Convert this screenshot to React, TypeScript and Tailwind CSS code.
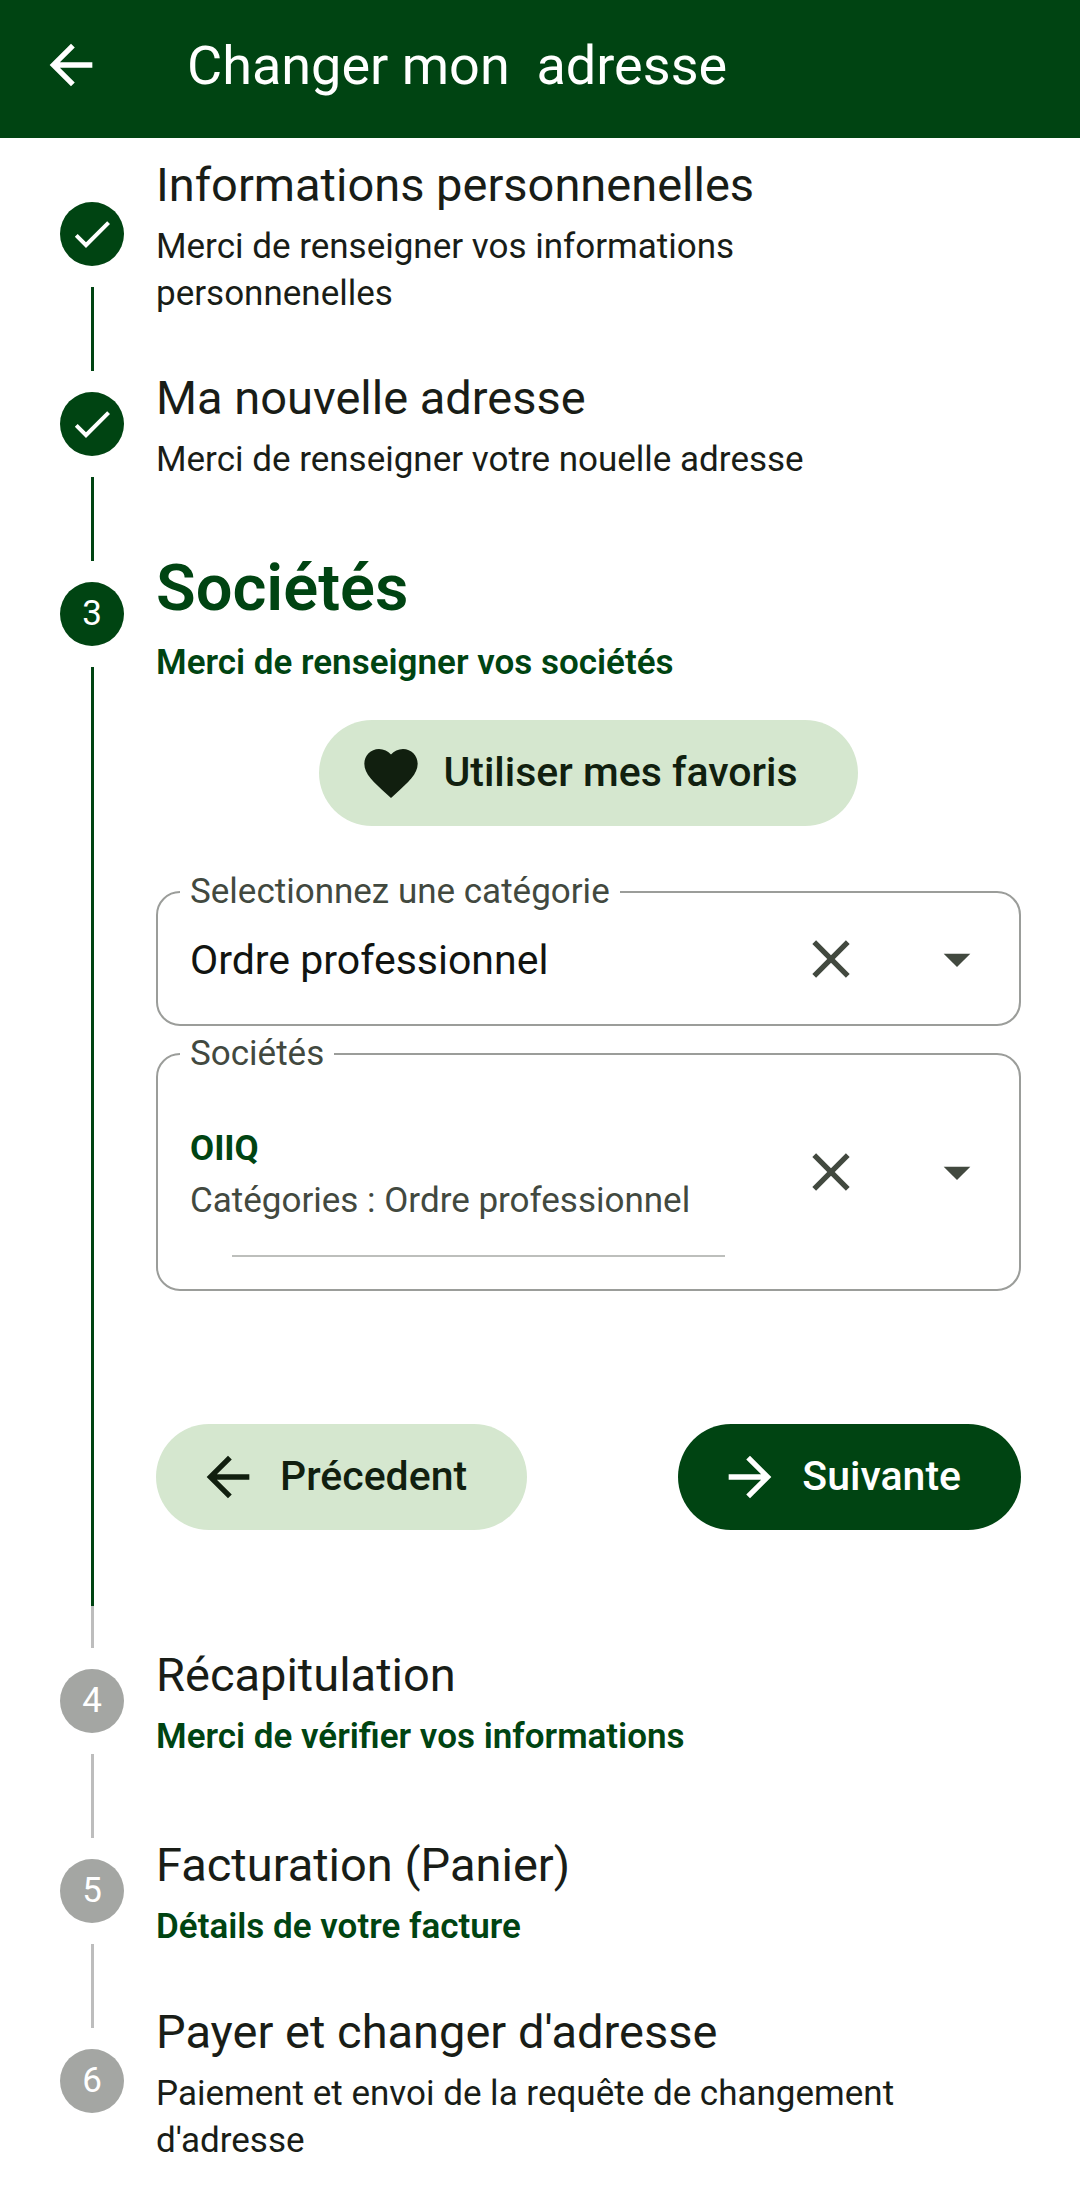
import React, { useState } from 'react';
import { MdArrowBack, MdArrowDropDown, MdArrowForward, MdCheck, MdClose, MdFavorite } from 'react-icons/md';

type StepState = 'done' | 'active' | 'todo';

interface StepDef {
  number: number;
  title: string;
  subtitle: string;
  state: StepState;
  highlight: boolean; // subtitle in bold green
}

const STEPS: StepDef[] = [
  {
    number: 1,
    title: 'Informations personnenelles',
    subtitle: 'Merci de renseigner vos informations personnenelles',
    state: 'done',
    highlight: false,
  },
  {
    number: 2,
    title: 'Ma nouvelle adresse',
    subtitle: 'Merci de renseigner votre nouelle adresse',
    state: 'done',
    highlight: false,
  },
  {
    number: 3,
    title: 'Sociétés',
    subtitle: 'Merci de renseigner vos sociétés',
    state: 'active',
    highlight: true,
  },
  {
    number: 4,
    title: 'Récapitulation',
    subtitle: 'Merci de vérifier vos informations',
    state: 'todo',
    highlight: true,
  },
  {
    number: 5,
    title: 'Facturation (Panier)',
    subtitle: 'Détails de votre facture',
    state: 'todo',
    highlight: true,
  },
  {
    number: 6,
    title: "Payer et changer d'adresse",
    subtitle: "Paiement et envoi de la requête de changement d'adresse",
    state: 'todo',
    highlight: false,
  },
];

interface StepProps {
  step: StepDef;
  first: boolean;
  last: boolean;
  children?: React.ReactNode;
}

const Step: React.FC<StepProps> = ({ step, first, last, children }) => {
  const todo = step.state === 'todo';
  const lineColor = todo ? 'bg-[#bdbdbd]' : 'bg-[#004412]';
  return (
    <li className="flex gap-8" aria-current={step.state === 'active' ? 'step' : undefined}>
      <div className="flex w-16 shrink-0 flex-col items-center">
        <div className={`h-[42px] w-[3px] ${first ? 'bg-transparent' : lineColor}`}></div>
        <div
          className={`my-[21px] flex size-16 items-center justify-center rounded-full text-[35px] text-white ${
            todo ? 'bg-[#a4a6a3]' : 'bg-[#004412]'
          }`}
        >
          {step.state === 'done' ? <MdCheck className="size-12" /> : step.number}
        </div>
        <div className={`w-[3px] flex-1 ${last ? 'bg-transparent' : lineColor}`}></div>
      </div>
      <div className="min-w-0 flex-1">
        <div className="flex min-h-[190px] flex-col justify-center gap-1.5">
          <h2
            className={
              step.state === 'active'
                ? 'text-[65px] leading-[90px] font-semibold text-[#004412]'
                : 'text-[47px] leading-[65px] text-[#191d17]'
            }
          >
            {step.title}
          </h2>
          <p
            className={`pr-16 text-[35px] leading-[47px] ${
              step.highlight ? 'font-semibold text-[#004412]' : 'text-[#191d17]'
            }`}
          >
            {step.subtitle}
          </p>
        </div>
        {children}
      </div>
    </li>
  );
};

interface OutlinedFieldProps {
  id: string;
  label: string;
  onClear: () => void;
  children: React.ReactNode;
}

// The legend is as thin as the border so that the label only cuts a notch in it
const OutlinedField: React.FC<OutlinedFieldProps> = ({ id, label, onClear, children }) => (
  <fieldset className="min-w-0 rounded-3xl border-2 border-[#9b9d9a] pl-[22px]">
    <legend className="flex h-0.5 items-center px-2.5">
      <label htmlFor={id} className="text-[35px] text-[#42493f]">
        {label}
      </label>
    </legend>
    <div className="flex items-center pl-2.5 text-[#42493f]">
      <div className="min-w-0 flex-1">{children}</div>
      <button
        type="button"
        aria-label="Effacer"
        onClick={onClear}
        className="flex h-[131px] w-32 shrink-0 items-center justify-center"
      >
        <MdClose className="size-16" />
      </button>
      <label htmlFor={id} className="flex h-[131px] w-[124px] shrink-0 items-center justify-center">
        <MdArrowDropDown className="size-16" />
      </label>
    </div>
  </fieldset>
);

interface PillButtonProps {
  icon: React.ReactNode;
  filled?: boolean;
  children: React.ReactNode;
}

const PillButton: React.FC<PillButtonProps> = ({ icon, filled, children }) => (
  <button
    type="button"
    className={`flex h-[106px] items-center gap-5 rounded-full pr-[60px] pl-10 text-[41px] font-medium ${
      filled ? 'bg-[#004412] text-white' : 'bg-[#d5e7cf] text-[#111f0f]'
    }`}
  >
    {icon}
    {children}
  </button>
);

const SocietesForm: React.FC = () => {
  const [category, setCategory] = useState('Ordre professionnel');
  const [company, setCompany] = useState('OIIQ');

  return (
    <form className="flex flex-col pt-[11px] pb-[76px]" onSubmit={e => e.preventDefault()}>
      <div className="flex justify-center">
        <PillButton icon={<MdFavorite className="size-16" />}>Utiliser mes favoris</PillButton>
      </div>
      <div className="mt-[65px] flex flex-col gap-[27px]">
        <OutlinedField id="category" label="Selectionnez une catégorie" onClear={() => setCategory('')}>
          <select
            id="category"
            value={category}
            onChange={e => setCategory(e.target.value)}
            className="w-full appearance-none bg-transparent pt-1 text-[41px] text-[#111411] outline-none"
          >
            <option value=""></option>
            <option>Ordre professionnel</option>
          </select>
        </OutlinedField>
        <OutlinedField id="company" label="Sociétés" onClear={() => setCompany('')}>
          <div className="pt-[68px] pb-8">
            <select
              id="company"
              value={company}
              onChange={e => setCompany(e.target.value)}
              className="block w-full appearance-none bg-transparent text-[35px] leading-[52px] font-bold text-[#004412] outline-none"
            >
              <option value=""></option>
              <option>OIIQ</option>
            </select>
            <p className="text-[35px] leading-[52px]">Catégories : Ordre professionnel</p>
            <hr className="mx-[42px] mt-7 border-t-2 border-[#bdbfbc]" />
          </div>
        </OutlinedField>
      </div>
      <div className="mt-[133px] flex justify-between">
        <PillButton icon={<MdArrowBack className="size-16" />}>Précedent</PillButton>
        <PillButton icon={<MdArrowForward className="size-16" />} filled>
          Suivante
        </PillButton>
      </div>
    </form>
  );
};

export default function App() {
  return (
    <div className="min-h-screen bg-white font-['Roboto',sans-serif]">
      <header className="flex h-[138px] items-center gap-[84px] bg-[#004412] px-[39px] pb-2 text-white">
        <button type="button" aria-label="Retour">
          <MdArrowBack className="size-16" />
        </button>
        <h1 className="text-[54px] whitespace-pre">Changer mon  adresse</h1>
      </header>
      <main>
        <ol className="pt-px pr-[59px] pl-[60px]">
          {STEPS.map((step, i) => (
            <Step key={step.number} step={step} first={i === 0} last={i === STEPS.length - 1}>
              {step.state === 'active' && <SocietesForm />}
            </Step>
          ))}
        </ol>
      </main>
    </div>
  );
}
